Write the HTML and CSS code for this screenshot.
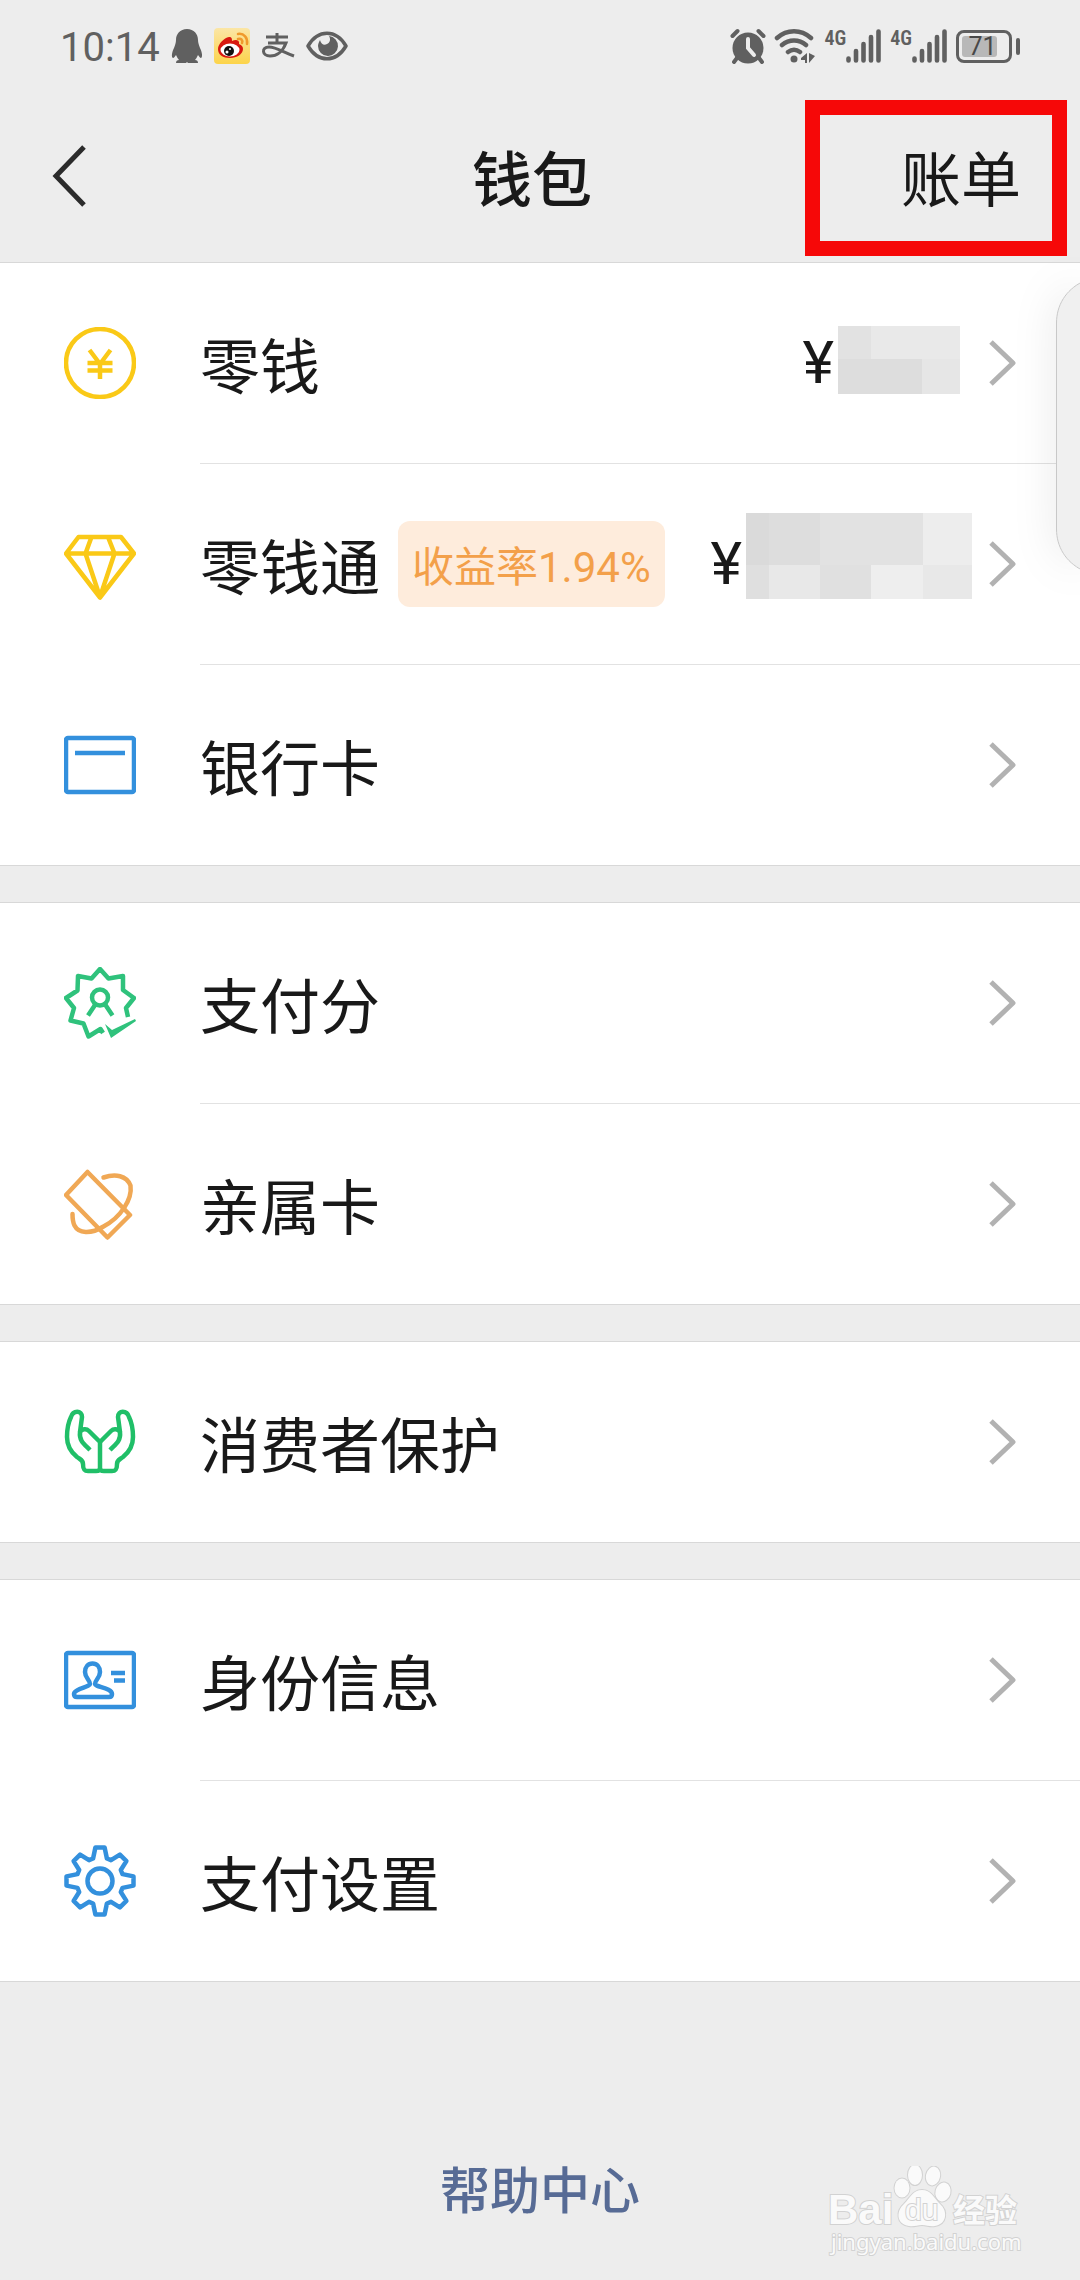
FILE: index.html
```html
<!DOCTYPE html>
<html lang="zh-CN">
<head>
    <meta charset="UTF-8">
    <meta name="viewport" content="width=device-width, initial-scale=1.0">
    <title>钱包</title>
    <link rel="stylesheet" href="styles.css">
</head>
<body>
    <!-- Shared shapes -->
    <svg class="defs" width="0" height="0" aria-hidden="true">
        <symbol id="chevron" viewBox="0 0 28 48">
            <path d="M3 3l22 21L3 45" fill="none" stroke="#b2b2b2" stroke-width="5" stroke-linejoin="round"/>
        </symbol>
        <symbol id="signal" viewBox="0 0 36 34">
            <path d="M2.500 29.500v2M10 22v9.500M17.500 15v16.500M25 8v23.500M32.500 2.500v29" fill="none" stroke="#606060" stroke-width="4.600" stroke-linecap="round"/>
        </symbol>
    </svg>

    <div class="status-bar">
        <div class="status-left">
            <span class="time">10:14</span>
            <svg width="32" height="36" viewBox="0 0 32 36">
                <path d="M16 1C9 1 5 6 5 12c0 3-1 5-2 8-2 4-3 9-1 10 1 0 2-2 3-3 1 2 2 4 3 5-2 0-3 1-3 3h10l1-1 1 1h10c0-2-1-3-3-3 1-1 2-3 3-5 1 1 2 3 3 3 2-1 1-6-1-10-1-3-2-5-2-8C27 6 23 1 16 1z" fill="#606060"/>
            </svg>
            <svg width="36" height="36" viewBox="0 0 36 36">
                <defs>
                    <linearGradient id="weiboBg" x1="0" y1="0" x2="0" y2="1">
                        <stop offset="0" stop-color="#fbe6a6"/>
                        <stop offset="1" stop-color="#fcd44a"/>
                    </linearGradient>
                </defs>
                <rect width="36" height="36" rx="4" fill="url(#weiboBg)"/>
                <path d="M4 21c0-5 6-11 11-12 3 0 3 2 3 4 4-2 8-1 7 3 3 1 4 3 4 5 0 5-6 9-13 9S4 27 4 21z" fill="#d8190f"/>
                <ellipse cx="16" cy="22" rx="9.500" ry="6.500" fill="#fff"/>
                <circle cx="15" cy="23" r="5" fill="#111"/>
                <circle cx="13" cy="24" r="1.500" fill="#fff"/>
                <circle cx="16" cy="21" r="1" fill="#fff"/>
                <path d="M24 6c6-1 10 4 9 10M24 11c3-1 5 1 4 4" fill="none" stroke="#f09a2c" stroke-width="2.500" stroke-linecap="round"/>
            </svg>
            <svg width="34" height="36" viewBox="0 0 34 36">
                <path d="M5 9h22M16 5v10M7 15h18c-3 8-9 13-16 13-8 0-9-9-1-9 7 0 14 5 25 9" fill="none" stroke="#606060" stroke-width="3"/>
            </svg>
            <svg width="42" height="36" viewBox="0 0 42 36">
                <path d="M2 18C12 1 30 1 40 18 30 35 12 35 2 18z" fill="none" stroke="#606060" stroke-width="3.500" stroke-linejoin="round"/>
                <path d="M23 8a10 10 0 1 1-11 10c0-2 1-4 2-6 1 4 4 6 7 4 3-1 4-5 2-8z" fill="#606060"/>
            </svg>
        </div>
        <div class="status-right">
            <svg width="36" height="36" viewBox="0 0 36 36">
                <circle cx="18" cy="20" r="15.500" fill="#606060"/>
                <path d="M2.500 8l5-5M33.500 8l-5-5M7 30l-3 4M29 30l3 4" fill="none" stroke="#606060" stroke-width="4" stroke-linecap="round"/>
                <path d="M18 11v9l6 7" fill="none" stroke="#ededed" stroke-width="4" stroke-linecap="round"/>
            </svg>
            <svg width="42" height="36" viewBox="0 0 42 36">
                <path d="M3 10C13 1 27 1 37 10M8 17c7-6 17-6 24 0M14 24c4-3 8-3 12 0" fill="none" stroke="#606060" stroke-width="4.500" stroke-linecap="round"/>
                <circle cx="20" cy="31" r="3.500" fill="#606060"/>
                <path d="M33 25v10h-2v-3h-4v-2zM35 25l6 3-6 7z" fill="#606060"/>
            </svg>
            <div class="network">
                <span class="network-type">4G</span>
                <svg width="36" height="34"><use href="#signal"/></svg>
            </div>
            <div class="network">
                <span class="network-type">4G</span>
                <svg width="36" height="34"><use href="#signal"/></svg>
            </div>
            <div class="battery"><span class="battery-level">71</span></div>
        </div>
    </div>

    <header class="header">
        <button class="back-btn" type="button" aria-label="返回">
            <svg width="36" height="64" viewBox="0 0 36 64">
                <path d="M32 3L4 32l28 29" fill="none" stroke="#2b2b2b" stroke-width="5"/>
            </svg>
        </button>
        <h1>钱包</h1>
        <a class="bill-link" href="#bill">账单</a>
        <span class="highlight"></span>
    </header>

    <main>
        <nav class="group">
            <a class="row" href="#balance">
                <svg class="icon icon-yellow" viewBox="0 0 72 72">
                    <circle cx="36" cy="36" r="34"/>
                    <path d="M25.500 23L36 37l10.500-14M23.500 36h25M23.500 43.500h25M36 36v16"/>
                </svg>
                <div class="row-body">
                    <span class="label">零钱</span>
                    <span class="amount">¥</span>
                    <svg class="mask" width="122" height="68" viewBox="0 0 122 68">
                        <rect width="122" height="68" fill="#e9e9e9"/>
                        <rect width="33" height="33" fill="#e2e2e2"/>
                        <rect y="33" width="84" height="35" fill="#dddddd"/>
                        <rect x="84" y="33" width="38" height="35" fill="#e6e6e6"/>
                    </svg>
                    <svg class="chevron"><use href="#chevron"/></svg>
                </div>
            </a>
            <a class="row" href="#lqt">
                <svg class="icon icon-yellow" viewBox="0 0 72 72">
                    <path d="M14.500 9h42.500L70 25.500 36 69.500 2 25.500zM2 25.500h68M27.500 9l-6 16.500L36 69l14.500-43.500L44 9"/>
                </svg>
                <div class="row-body">
                    <span class="label">零钱通</span>
                    <span class="rate">收益率<span class="rate-value">1.94%</span></span>
                    <span class="amount">¥</span>
                    <svg class="mask mask-large" width="226" height="86" viewBox="0 0 226 86">
                        <rect width="226" height="86" fill="#e2e2e2"/>
                        <rect width="23" height="52" fill="#dadada"/>
                        <rect x="23" width="51" height="52" fill="#dddddd"/>
                        <rect x="177" width="49" height="52" fill="#ededed"/>
                        <rect y="52" width="23" height="34" fill="#dfdfdf"/>
                        <rect x="23" y="52" width="51" height="34" fill="#e8e8e8"/>
                        <rect x="74" y="52" width="51" height="34" fill="#e0e0e0"/>
                        <rect x="125" y="52" width="52" height="34" fill="#eeeeee"/>
                        <rect x="177" y="52" width="49" height="34" fill="#e8e8e8"/>
                    </svg>
                    <svg class="chevron"><use href="#chevron"/></svg>
                </div>
            </a>
            <a class="row" href="#cards">
                <svg class="icon icon-blue" viewBox="0 0 72 72">
                    <rect x="2" y="9" width="68" height="54" rx="2"/>
                    <path d="M11 24h50"/>
                </svg>
                <div class="row-body">
                    <span class="label">银行卡</span>
                    <svg class="chevron"><use href="#chevron"/></svg>
                </div>
            </a>
        </nav>

        <nav class="group">
            <a class="row" href="#score">
                <svg class="icon icon-mint" viewBox="0 0 72 72">
                    <path d="M64 50l-2-9 8-10-11-8V9l-14.500 2.500L36 2l-8.500 9.500L14 9l-.5 14.500L2 31l8 10-3.500 12.500 13 3 5 13L36.500 62l2.500 4"/>
                    <circle cx="36" cy="30.500" r="8"/>
                    <path d="M31 38l-7 10.500M41.500 38l7 10.500"/>
                    <path class="solid" d="M41 57l7 6 23-11 1 2-25 17z"/>
                </svg>
                <div class="row-body">
                    <span class="label">支付分</span>
                    <svg class="chevron"><use href="#chevron"/></svg>
                </div>
            </a>
            <a class="row" href="#family">
                <svg class="icon icon-orange" viewBox="0 0 72 72">
                    <path d="M23.500 4L66 47 43.500 69.500 2 27z"/>
                    <path d="M39.500 9.500c12-4 23-2 27 8 2 14-10 32-27 41-13 8-25 7-29-1-2-4-2-8-2-11.500" stroke-linecap="round"/>
                </svg>
                <div class="row-body">
                    <span class="label">亲属卡</span>
                    <svg class="chevron"><use href="#chevron"/></svg>
                </div>
            </a>
        </nav>

        <nav class="group">
            <a class="row" href="#protect">
                <svg class="icon icon-green" viewBox="0 0 72 72">
                    <path d="M36 62V36L25 25c-3-3-7-2-9 1l2-15c0-7-9-7-11 0C4 17 3 24 3 31c0 10 5 16 10 20 4 3 6 3 6 7 0 5 1 7 5 7h8c3 0 4-1 4-3M16 26c-1 9 4 12 10 18"/>
                    <path d="M36 36l11-11c3-3 7-2 9 1l-2-15c0-7 9-7 11 0 3 6 4 13 4 20 0 10-5 16-10 20-4 3-6 3-6 7 0 5-1 7-5 7h-8c-3 0-4-1-4-3M56 26c1 9-4 12-10 18"/>
                </svg>
                <div class="row-body">
                    <span class="label">消费者保护</span>
                    <svg class="chevron"><use href="#chevron"/></svg>
                </div>
            </a>
        </nav>

        <nav class="group">
            <a class="row" href="#identity">
                <svg class="icon icon-blue" viewBox="0 0 72 72">
                    <rect x="2" y="9" width="68" height="54" rx="2"/>
                    <path d="M26 40c0-4-5-6-5-12 0-5 3-8.500 7.500-8.500S36 23 36 28c0 6-5 8-5 12 0 3 17 4 17 10 0 2-1 3-3 3H13c-2 0-3-1-3-3 0-5 16-7 16-10z"/>
                    <path d="M47 29h14M50 36.500h11"/>
                </svg>
                <div class="row-body">
                    <span class="label">身份信息</span>
                    <svg class="chevron"><use href="#chevron"/></svg>
                </div>
            </a>
            <a class="row" href="#settings">
                <svg class="icon icon-blue" viewBox="-36 -36 72 72">
                    <path d="M-6.900-22.500L-4.600-33.500H4.600L6.900-22.500 11-20.800 19.900-26.400 26.400-19.900 20.800-11 22.500-6.900 33.500-4.600V4.600L22.500 6.900 20.800 11 26.400 19.900 19.900 26.400 11 20.800 6.900 22.500 4.600 33.500H-4.600L-6.900 22.500-11 20.800-19.900 26.400-26.400 19.900-20.800 11-22.500 6.900-33.500 4.600V-4.600L-22.500-6.900-20.800-11-26.400-19.900-19.900-26.400-11-20.800z"/>
                    <circle r="12.500"/>
                </svg>
                <div class="row-body">
                    <span class="label">支付设置</span>
                    <svg class="chevron"><use href="#chevron"/></svg>
                </div>
            </a>
        </nav>
    </main>

    <footer class="footer">
        <a href="#help">帮助中心</a>
    </footer>

    <!-- Edge of the floating side panel -->
    <svg class="side-panel" width="24" height="302" viewBox="0 0 24 302">
        <path d="M26 7C10 15 .5 30 .5 48v206c0 18 9.500 33 25.500 41z" fill="#f0f0f0" stroke="#c8c8c8"/>
    </svg>

    <svg class="watermark" width="200" height="100" viewBox="0 0 200 100">
        <text class="wm-logo" x="0" y="58">Bai</text>
        <ellipse cx="74" cy="22" rx="7.500" ry="9.500"/>
        <ellipse cx="87" cy="9" rx="7" ry="10"/>
        <ellipse cx="105" cy="10" rx="7" ry="9.500" transform="rotate(12 105 10)"/>
        <ellipse cx="115" cy="26" rx="7.500" ry="9.500" transform="rotate(15 115 26)"/>
        <path d="M94 24c9 0 12 8 18 14 8 7 7 20-5 22-5 1-8-1-13-1s-8 2-13 1c-13-2-13-15-5-22 6-6 9-14 18-14z"/>
        <text class="wm-du" x="77" y="54">du</text>
        <text class="wm-cn" x="125" y="56">经验</text>
        <text class="wm-url" x="3" y="84">jingyan.baidu.com</text>
    </svg>
</body>
</html>
```
FILE: styles.css
```css
* { box-sizing: border-box; }
body { position: relative; margin: 0; min-height: 100vh; background: #ededed; color: #191919; font-family: "Noto Sans CJK SC", sans-serif; }
a { color: inherit; text-decoration: none; }
svg { display: block; flex: none; }
.defs { position: absolute; }

/* Status bar */
.status-bar { display: flex; justify-content: space-between; align-items: center; height: 90px; padding: 2px 60px 0; color: #606060; font-family: Roboto, sans-serif; }
.status-left, .status-right { display: flex; align-items: center; gap: 11px; }
.status-right { gap: 8px; }
.time { padding-top: 4px; font-size: 40px; line-height: 48px; }
.network { display: flex; align-items: flex-start; }
.network-type { font-size: 20px; font-weight: 600; line-height: 18px; font-family: "Roboto Condensed", Roboto, sans-serif; }
.battery { position: relative; display: flex; align-items: center; width: 56px; height: 33px; margin-right: 8px; padding: 3px; border: 3px solid #606060; border-radius: 8px; }
.battery::after { content: ""; position: absolute; right: -11px; top: 5px; width: 4px; height: 17px; border-radius: 2px; background: #606060; }
.battery-level { width: 35px; height: 21px; padding-left: 6px; border-radius: 3px; background: #b8b8b8; color: #484848; font-size: 25px; line-height: 21px; text-align: center; }

/* Header */
.header { position: relative; display: grid; grid-template-columns: 1fr auto 1fr; align-items: center; height: 172px; padding: 0 59px 0 43px; }
.header h1 { margin: 0; font-size: 60px; font-weight: 500; line-height: 88px; }
.back-btn { justify-self: start; padding: 0 9px; border: none; background: none; cursor: pointer; }
.bill-link { justify-self: end; font-size: 60px; line-height: 88px; }
.highlight { position: absolute; top: 10px; right: 13px; bottom: 6px; width: 262px; border: 15px solid #f60808; pointer-events: none; }

/* Rows */
.group { margin-bottom: 36px; border-top: 1px solid #d8d8d8; border-bottom: 1px solid #d8d8d8; background: #fff; }
.row { display: flex; align-items: center; }
.row-body { display: flex; flex: 1; align-items: center; height: 200px; padding-right: 64px; }
.row + .row .row-body { height: 201px; border-top: 1px solid #e2e2e2; }
.icon { width: 72px; height: 72px; margin: 0 64px; fill: none; stroke: currentColor; stroke-width: 4.5; stroke-linejoin: round; }
.icon .solid { fill: currentColor; stroke: none; }
.icon-yellow { color: #fac917; }
.icon-blue { color: #3390dd; }
.icon-mint { color: #2fc27c; }
.icon-orange { color: #f0a855; }
.icon-green { color: #20bf68; }
.label { font-size: 60px; line-height: 88px; }
.rate { height: 86px; margin-left: 18px; padding: 0 14px; border-radius: 12px; background: #feecdc; color: #f3a04a; font-size: 42px; line-height: 86px; }
.rate-value { font-family: Roboto, sans-serif; }
.amount { margin-left: auto; font-family: Roboto, sans-serif; font-size: 60px; line-height: 88px; }
.mask { margin: 0 28px 6px 4px; }
.mask-large { margin: 0 16px 16px 4px; }
.chevron { width: 28px; height: 48px; }
.row-body .label:last-of-type { margin-right: auto; }

/* Footer */
.footer { padding-top: 132px; text-align: center; color: #576b95; font-size: 50px; font-weight: 500; line-height: 74px; }

/* Overlays */
.side-panel { position: absolute; top: 275px; right: 0; filter: drop-shadow(0 0 20px rgba(0, 0, 0, 0.1)); }
.watermark { position: absolute; right: 52px; bottom: 14px; fill: #fafafa; stroke: #d2d2d2; stroke-width: 2; paint-order: stroke; }
.wm-logo { font: bold 42px "Liberation Sans", sans-serif; }
.wm-du { font: 30px "Liberation Sans", sans-serif; }
.wm-cn { font: bold 32px "Noto Sans CJK SC", sans-serif; }
.wm-url { font: 22px "Noto Sans", sans-serif; }
```
